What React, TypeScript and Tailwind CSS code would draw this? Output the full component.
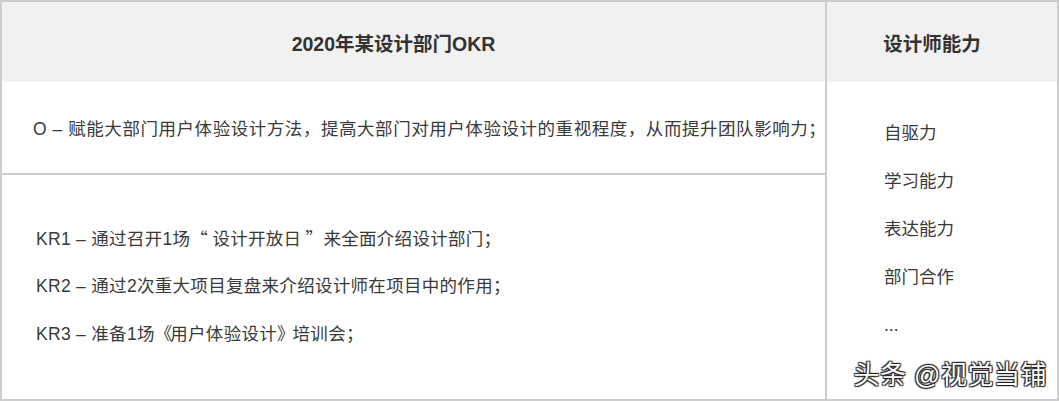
const font = { fontFamily: '"Liberation Sans", "Noto Sans CJK SC", sans-serif' }
const cjk = { fontFamily: '"Noto Sans CJK SC", sans-serif' }

const skills = ["自驱力", "学习能力", "表达能力", "部门合作", "..."]

export default function App() {
  return (
    <div className="w-[1059px] h-[401px] bg-white" style={font}>
      <div className="relative flex h-full w-full border-2 border-[#cdcdcd] text-[#3a3a3a]">
        <div className="flex w-[825px] flex-col border-r-2 border-[#cdcdcd]">
          <div className="flex h-[80px] items-center justify-center bg-[#f1f1f1] pt-[6px] pr-[40px] text-[19.5px] font-bold text-[#333]">
            2020年某设计部门OKR
          </div>
          <div className="flex h-[93px] items-center whitespace-nowrap border-b-2 border-[#cdcdcd] pl-[31px] pt-[4px] text-[17.5px] tracking-[0.55px]">
            O&nbsp;–&nbsp;赋能大部门用户体验设计方法，提高大部门对用户体验设计的重视程度，从而提升团队影响力；
          </div>
          <div className="flex flex-1 flex-col gap-[24px] whitespace-nowrap pl-[34px] pt-[51px] text-[17.5px] tracking-[0.3px]">
            <div className="h-[24px] leading-[24px]">
              KR1 – 通过召开1场<span style={cjk}>“ </span>设计开放日<span style={cjk}> ”</span>来全面介绍设计部门；
            </div>
            <div className="h-[24px] leading-[24px]">KR2 – 通过2次重大项目复盘来介绍设计师在项目中的作用；</div>
            <div className="h-[24px] leading-[24px]">
              KR3 – 准备1场<span className="tracking-[-2px]">《</span>用户体验设计<span className="tracking-[-2px]">》</span>培训会；
            </div>
          </div>
        </div>
        <div className="flex flex-1 flex-col">
          <div className="flex h-[80px] items-center justify-center bg-[#f1f1f1] pt-[6px] pr-[20px] text-[19.5px] font-bold text-[#333]">
            设计师能力
          </div>
          <div className="flex flex-col gap-[24px] pl-[57px] pt-[39px] text-[17.5px]">
            {skills.map((s) => (
              <div key={s} className="h-[24px] leading-[24px]">{s}</div>
            ))}
          </div>
        </div>
        <div
          className="absolute right-[10px] bottom-[4px] text-[26px] tracking-[0.5px] text-white"
          style={{ textShadow: "1px 1px 1px #222, -1px -1px 1px #222, 1px -1px 1px #222, -1px 1px 1px #222" }}
        >
          头条 @视觉当铺
        </div>
      </div>
    </div>
  )
}
